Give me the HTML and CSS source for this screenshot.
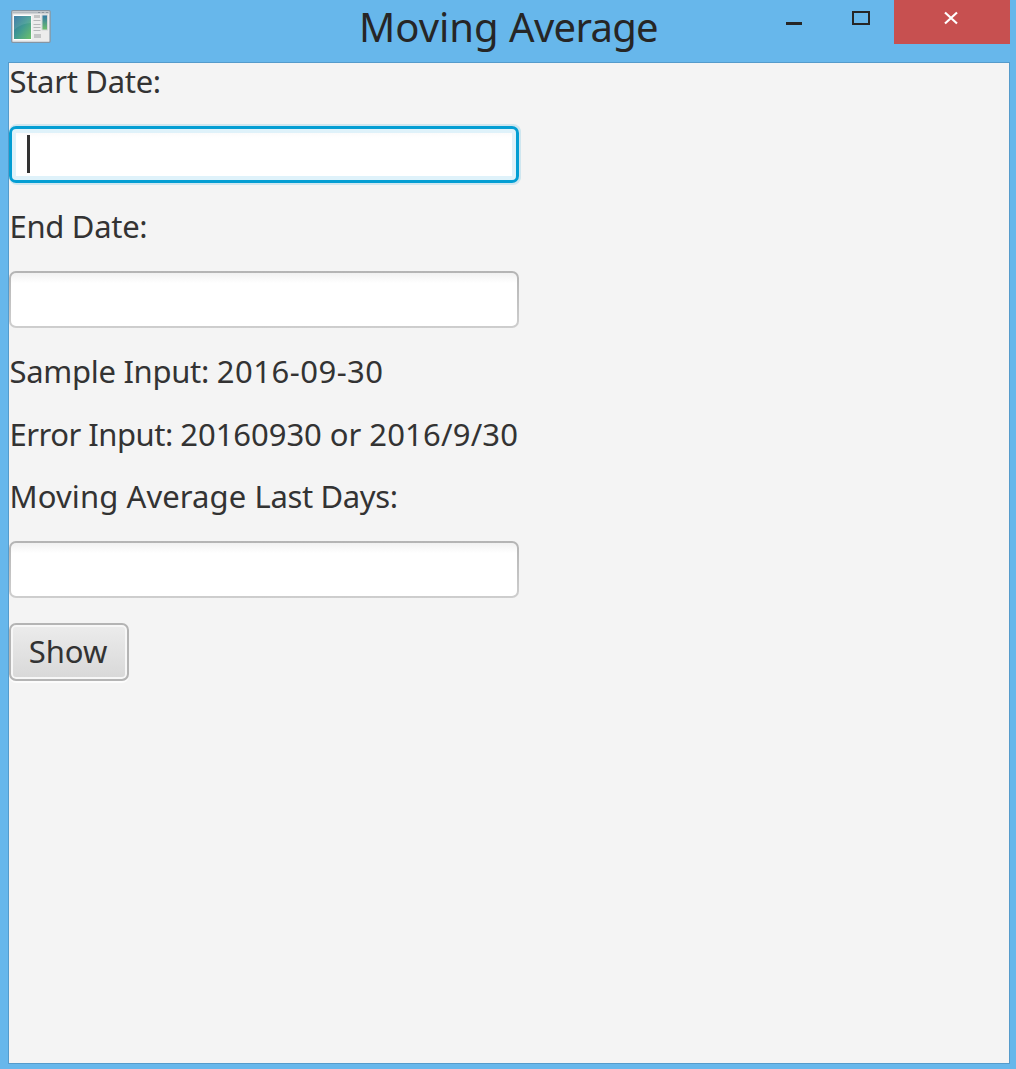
FILE: index.html
```html
<!DOCTYPE html>
<html lang="en">
<head>
<meta charset="utf-8">
<title>Moving Average</title>
<link rel="stylesheet" href="styles.css">
</head>
<body>
<div class="window">
  <header class="titlebar">
    <svg class="app-icon" width="40" height="34" viewBox="0 0 40 34">
      <defs>
        <linearGradient id="pane" x1="0" y1="0" x2="1" y2="1">
          <stop offset="0" stop-color="#2b6fa0"/><stop offset=".5" stop-color="#419a92"/><stop offset="1" stop-color="#6cc06a"/>
        </linearGradient>
        <linearGradient id="strip" x1="0" y1="0" x2="0" y2="1">
          <stop offset="0" stop-color="#2f77a8"/><stop offset="1" stop-color="#72c069"/>
        </linearGradient>
      </defs>
      <rect x=".7" y=".7" width="38.4" height="31.6" rx="1" fill="#ececec" stroke="#8595a3" stroke-width="1.3"/>
      <path d="M1.4 2.5H38.5" stroke="#b3bac0" stroke-width="2"/>
      <path d="M27 2.5h2M31 2.5h2M35 2.5h2" stroke="#8d969e"/>
      <rect x="2.500" y="5" width="18" height="25" fill="#fff"/>
      <rect x="3" y="6" width="17" height="23" fill="url(#pane)"/>
      <path d="M3 6h17v7Q11 13 3 20Z" fill="#fff" opacity=".1"/>
      <path d="M23 5h6v3h-6zM23 24h7v4h-7z" fill="#c3c5c6"/>
      <path d="M22.500 10.500h7M22.500 14.500h7M22.500 17.500h7M22.500 20.500h7" stroke="#b5b8ba"/>
      <rect x="31" y="5" width="5.500" height="15" fill="url(#strip)" stroke="#d2d5d6"/>
    </svg>
    <h1 class="title">Moving <span class="tight">Average</span></h1>
    <div class="controls">
      <svg class="control" width="67" height="44" viewBox="0 0 67 44"><path d="M16 23.500h16" stroke="#262626" stroke-width="3"/></svg>
      <svg class="control" width="57" height="44" viewBox="0 0 57 44"><path d="M16 12h16v12H16z" fill="none" stroke="#262626" stroke-width="2"/></svg>
      <svg class="control close" width="116" height="44" viewBox="0 0 116 44"><path d="M51 12.500L63 23.500M63 12.500L51 23.500" stroke="#fff" stroke-width="2.200"/></svg>
    </div>
  </header>
  <main class="client">
    <div class="label start">Start Date:</div>
    <div class="field focused"><span class="caret"></span></div>
    <div class="label start">End Date:</div>
    <div class="field"></div>
    <div class="label sample">Sample Input: <span class="date">2016-09-30</span></div>
    <div class="label error">Error Input: <span class="digits">20160930 or </span><span class="slashed">2016/9/30</span></div>
    <div class="label days">Moving Average <span class="tail">Last Days:</span></div>
    <div class="field"></div>
    <button class="show" type="button">Show</button>
  </main>
</div>
</body>
</html>
```
FILE: styles.css
```css
* { box-sizing: border-box; }
body { margin: 0; }
.window {
  width: 1016px;
  height: 1069px;
  padding: 0 6px 5px 8px;
  display: flex;
  flex-direction: column;
  background: #67b7eb;
  font-family: "Noto Sans", sans-serif;
  color: #333;
  overflow: hidden;
}
.titlebar {
  height: 62px;
  flex: none;
  display: grid;
  grid-template-columns: 351px 1fr 240px;
  align-items: start;
}
.app-icon { margin: 10px 0 0 3px; }
.title {
  margin: 0;
  font-size: 40px;
  line-height: 54px;
  font-weight: 400;
  color: #262626;
  white-space: nowrap;
}
.tight { letter-spacing: -0.7px; }
.controls { display: flex; }
.control { flex: none; }
.close { background: #c75050; }
.client {
  flex: 1;
  display: flex;
  flex-direction: column;
  align-items: flex-start;
  gap: 25px;
  width: 1002px;
  border: 1px solid #559bcb;
  background: #f4f4f4;
}
.label {
  height: 37.5px;
  line-height: 37.5px;
  padding-left: 0.5px;
  font-size: 31px;
  white-space: nowrap;
}
.start { letter-spacing: -0.3px; }
.sample { letter-spacing: -0.3px; }
.date { letter-spacing: 0.5px; }
.error { letter-spacing: -0.5px; }
.digits { letter-spacing: -0.05px; }
.slashed { letter-spacing: 0.2px; }
.days { letter-spacing: 0.1px; }
.tail { letter-spacing: -0.35px; }
.field {
  width: 510px;
  height: 57.5px;
  border: 2px solid transparent;
  border-radius: 7px;
  background:
    linear-gradient(#f1f1f1, #fff 10px) padding-box,
    linear-gradient(#b4b4b4, #cecece) border-box;
}
.focused {
  display: flex;
  align-items: center;
  padding-left: 15px;
  border: 3px solid #039ed3;
  background: linear-gradient(#f8f8f8, #fff 9px);
  box-shadow: inset 0 0 0 4px #dff2fa, 1px 0 0 1px #cfe6ef, 1px 1px 0 1px #cfe6ef, 1px -1px 0 1px #cfe6ef;
}
.caret { width: 3px; height: 38px; background: #333; }
.show {
  width: 120px;
  height: 57.5px;
  padding: 0 2px 2px 0;
  border: 2px solid #b4b4b4;
  border-radius: 7px;
  background: linear-gradient(#ececec, #d8d8d8);
  box-shadow: inset 0 0 0 2px #f7f7f7, 0 2px 0 #fcfcfc;
  font: 31px/50px "Noto Sans", sans-serif;
  color: #333;
}
```
